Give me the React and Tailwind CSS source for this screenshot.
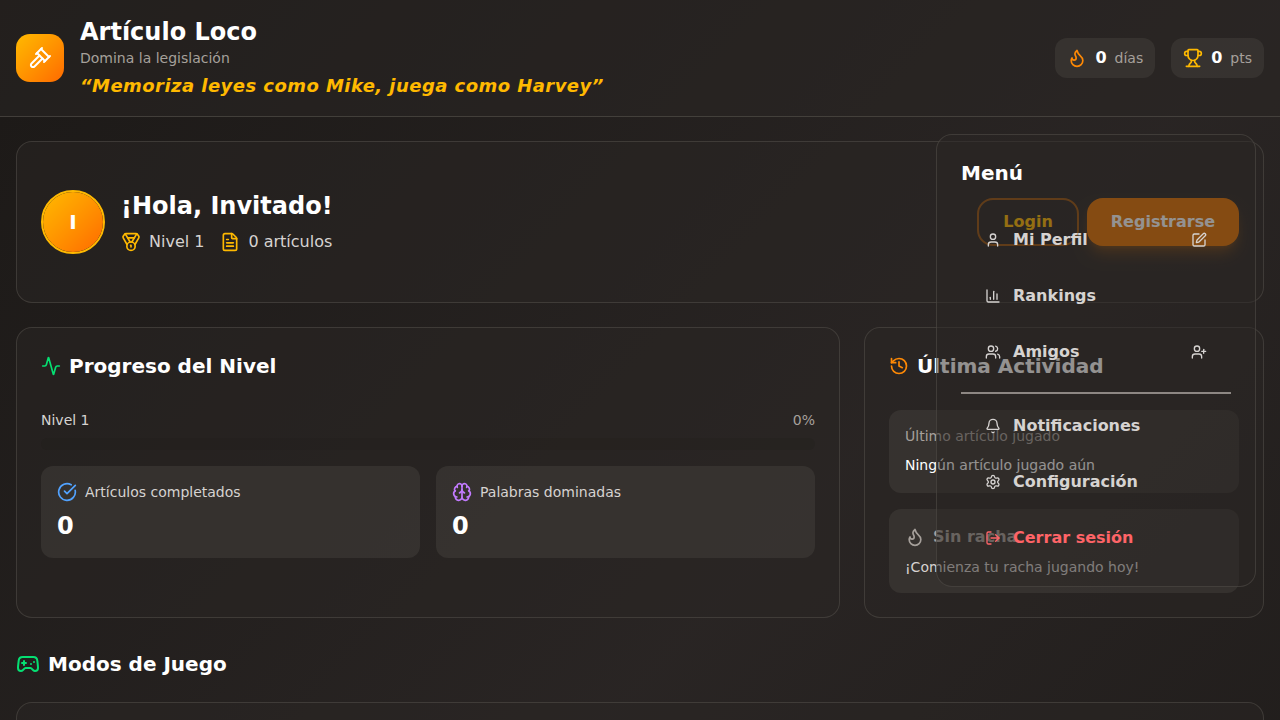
import React from 'react';
import {
	Activity, Bell, Brain, ChartColumn, CircleCheckBig, FileText, Flame, Gamepad2,
	History, LogOut, Medal, Settings, SquarePen, Trophy, User, UserPlus, Users,
} from 'lucide-react';

function GavelIcon() {
	return (
		<svg
			width="24"
			height="24"
			viewBox="0 0 24 24"
			fill="none"
			stroke="currentColor"
			strokeWidth="2"
			strokeLinecap="round"
			strokeLinejoin="round"
			aria-hidden="true"
		>
			<path d="m14.5 12.5-8 8a2.119 2.119 0 1 1-3-3l8-8" />
			<path d="m16 16 6-6" />
			<path d="m8 8 6-6" />
			<path d="m9 7 8 8" />
			<path d="m21 11-8-8" />
		</svg>
	);
}

function StatPill({ icon, value, unit }) {
	return (
		<div className="flex items-center gap-2 rounded-xl bg-stone-700/50 px-3 py-2">
			{icon}
			<span className="font-bold text-white">{value}</span>
			<span className="text-sm text-stone-400">{unit}</span>
		</div>
	);
}

function Header() {
	return (
		<header className="relative z-20 border-b border-stone-600/60 bg-stone-800/50">
			<div className="flex items-center justify-between p-4">
				<div className="flex items-center gap-4">
					<div className="flex size-12 items-center justify-center rounded-[14px] bg-gradient-to-br from-amber-400 to-orange-500 text-white">
						<GavelIcon />
					</div>
					<div>
						<h1 className="text-2xl font-bold text-white">Artículo Loco</h1>
						<p className="text-sm text-stone-400">Domina la legislación</p>
						<p className="mt-1 text-lg font-bold italic tracking-wide text-amber-400">
							“Memoriza leyes como Mike, juega como Harvey”
						</p>
					</div>
				</div>
				<div className="flex items-center gap-4">
					<StatPill icon={<Flame size={20} className="text-orange-400" />} value="0" unit="días" />
					<StatPill icon={<Trophy size={20} className="text-amber-400" />} value="0" unit="pts" />
				</div>
			</div>
			<Menu />
		</header>
	);
}

function MenuItem({ icon, label, action, danger }) {
	return (
		<button
			className={
				'flex w-full items-center gap-3 rounded-xl px-6 py-3 text-left font-semibold ' +
				(danger ? 'text-red-400' : 'text-stone-300')
			}
		>
			{icon}
			<span className="flex-1">{label}</span>
			{action}
		</button>
	);
}

// Floats under the header, over the cards
function Menu() {
	return (
		<nav className="absolute right-6 top-full mt-4.5 w-80 rounded-2xl border border-stone-600/50 bg-stone-800/50 p-6">
			<h3 className="mb-[29px] text-xl font-bold text-white">Menú</h3>
			<div className="flex flex-col gap-2">
				<MenuItem icon={<User size={16} />} label="Mi Perfil" action={<SquarePen size={16} />} />
				<MenuItem icon={<ChartColumn size={16} />} label="Rankings" />
				<MenuItem icon={<Users size={16} />} label="Amigos" action={<UserPlus size={16} />} />
				<hr className="mt-2 border-t-2 border-stone-400/80" />
				<MenuItem icon={<Bell size={16} />} label="Notificaciones" />
				<MenuItem icon={<Settings size={16} />} label="Configuración" />
				<MenuItem icon={<LogOut size={16} />} label="Cerrar sesión" danger />
			</div>
		</nav>
	);
}

function Card({ className = '', children }) {
	return (
		<div className={'rounded-2xl border border-stone-600/50 bg-stone-800/50 px-6 ' + className}>
			{children}
		</div>
	);
}

function CardTitle({ icon, children }) {
	return (
		<h3 className="mb-[30px] flex items-center gap-2 text-xl font-bold text-white">
			{icon}
			{children}
		</h3>
	);
}

function StatBox({ icon, label, value }) {
	return (
		<div className="rounded-xl bg-stone-700/50 p-4">
			<div className="flex items-center gap-2 text-sm text-stone-300">
				{icon}
				{label}
			</div>
			<p className="mt-2 text-2xl font-bold text-white">{value}</p>
		</div>
	);
}

function Welcome() {
	return (
		<Card className="flex items-center justify-between py-12">
			<div className="flex items-center gap-4">
				<div className="size-16 rounded-full border-2 border-amber-400">
					<div className="flex size-full items-center justify-center rounded-full bg-gradient-to-br from-amber-400 to-orange-500 text-xl font-bold text-white">
						I
					</div>
				</div>
				<div>
					<h2 className="text-2xl font-bold text-white">¡Hola, Invitado!</h2>
					<div className="mt-2 flex items-center gap-4 text-stone-300">
						<span className="flex items-center gap-2">
							<Medal size={20} className="text-amber-400" />
							Nivel 1
						</span>
						<span className="flex items-center gap-2">
							<FileText size={20} className="text-amber-400" />
							0 artículos
						</span>
					</div>
				</div>
			</div>
			<div className="flex items-center gap-2">
				<button className="h-12 rounded-2xl border-2 border-amber-600/60 px-6 font-bold text-amber-400">
					Login
				</button>
				<button className="h-12 rounded-2xl bg-amber-600 px-6 font-bold text-white shadow-lg shadow-amber-600/30">
					Registrarse
				</button>
			</div>
		</Card>
	);
}

function Progress() {
	return (
		<Card className="py-6 lg:col-span-2">
			<CardTitle icon={<Activity size={20} className="text-green-400" />}>Progreso del Nivel</CardTitle>
			<div className="flex justify-between text-sm">
				<span className="text-stone-300">Nivel 1</span>
				<span className="text-stone-400">0%</span>
			</div>
			<div className="mt-2 h-3 rounded-full bg-stone-900/15" />
			<div className="mt-4 grid grid-cols-2 gap-4">
				<StatBox icon={<CircleCheckBig size={20} className="text-blue-400" />} label="Artículos completados" value="0" />
				<StatBox icon={<Brain size={20} className="text-purple-400" />} label="Palabras dominadas" value="0" />
			</div>
		</Card>
	);
}

function LastActivity() {
	return (
		<Card className="py-6">
			<CardTitle icon={<History size={20} className="text-orange-400" />}>Última Actividad</CardTitle>
			<div className="flex flex-col gap-4 text-sm">
				<div className="rounded-xl bg-stone-700/50 p-4">
					<p className="text-stone-400">Último artículo jugado</p>
					<p className="mt-2 leading-[23px] text-white">Ningún artículo jugado aún</p>
				</div>
				<div className="rounded-xl bg-stone-700/50 p-4">
					<p className="flex items-center gap-2 text-base font-bold text-stone-400">
						<Flame size={20} />
						Sin racha
					</p>
					<p className="mt-2 text-stone-300">¡Comienza tu racha jugando hoy!</p>
				</div>
			</div>
		</Card>
	);
}

function App() {
	return (
		<div className="min-h-screen bg-gradient-to-br from-stone-900 via-stone-800 to-stone-900 font-['DejaVu_Sans',sans-serif]">
			<Header />
			<main className="px-4 py-6">
				<Welcome />
				<div className="mt-6 grid grid-cols-1 gap-6 lg:grid-cols-3">
					<Progress />
					<LastActivity />
				</div>
				<section className="mt-8">
					<h2 className="mb-6 flex items-center gap-2 text-xl font-bold text-white">
						<Gamepad2 size={24} className="text-green-400" />
						Modos de Juego
					</h2>
					<Card className="min-h-160 py-6" />
				</section>
			</main>
		</div>
	);
}

export default App;
